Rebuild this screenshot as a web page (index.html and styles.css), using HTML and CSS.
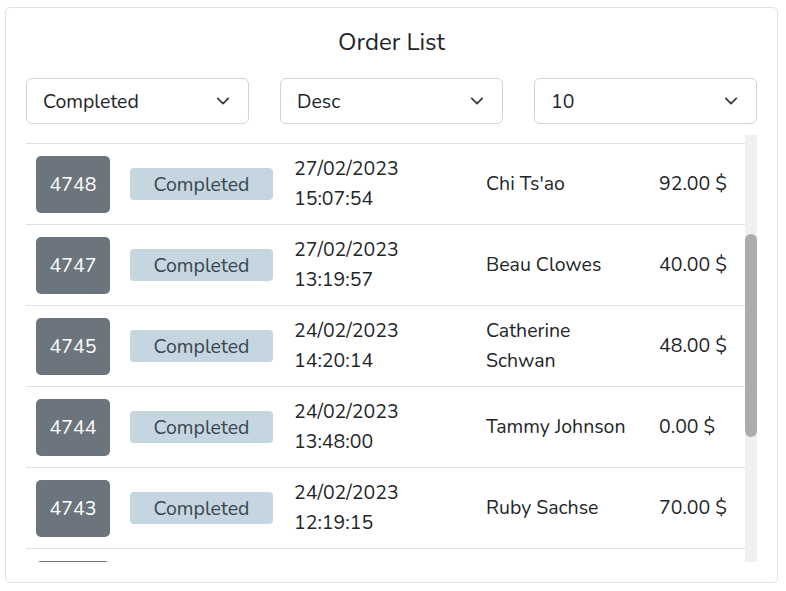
FILE: index.html
```html
<!DOCTYPE html>
<html lang="en">
<head>
<meta charset="utf-8">
<title>Order List</title>
<link rel="stylesheet" href="styles.css">
</head>
<body>
<div class="card">
  <h1 class="title">Order List</h1>
  <div class="filters">
    <div class="select"><span>Completed</span><svg class="chev" viewBox="0 0 16 16"><path d="M2 5l6 6 6-6"/></svg></div>
    <div class="select"><span>Desc</span><svg class="chev" viewBox="0 0 16 16"><path d="M2 5l6 6 6-6"/></svg></div>
    <div class="select"><span>10</span><svg class="chev" viewBox="0 0 16 16"><path d="M2 5l6 6 6-6"/></svg></div>
  </div>
  <div class="list-wrap">
    <div class="list" id="list">
      <div class="row"><div class="id">4752</div><div class="badge">Completed</div><div class="date">28/02/2023<br>10:12:31</div><div class="name">Lena Moritz</div><div class="amount">35.00 $</div></div>
      <div class="row"><div class="id">4750</div><div class="badge">Completed</div><div class="date">28/02/2023<br>09:41:08</div><div class="name">Omar Haddad</div><div class="amount">12.00 $</div></div>
      <div class="row"><div class="id">4749</div><div class="badge">Completed</div><div class="date">27/02/2023<br>18:03:22</div><div class="name">Ines Duarte</div><div class="amount">64.00 $</div></div>
      <div class="row"><div class="id">4748</div><div class="badge">Completed</div><div class="date">27/02/2023<br>15:07:54</div><div class="name">Chi Ts'ao</div><div class="amount">92.00 $</div></div>
      <div class="row"><div class="id">4747</div><div class="badge">Completed</div><div class="date">27/02/2023<br>13:19:57</div><div class="name">Beau Clowes</div><div class="amount">40.00 $</div></div>
      <div class="row"><div class="id">4745</div><div class="badge">Completed</div><div class="date">24/02/2023<br>14:20:14</div><div class="name">Catherine Schwan</div><div class="amount">48.00 $</div></div>
      <div class="row"><div class="id">4744</div><div class="badge">Completed</div><div class="date">24/02/2023<br>13:48:00</div><div class="name">Tammy Johnson</div><div class="amount">0.00 $</div></div>
      <div class="row"><div class="id">4743</div><div class="badge">Completed</div><div class="date">24/02/2023<br>12:19:15</div><div class="name">Ruby Sachse</div><div class="amount">70.00 $</div></div>
      <div class="row"><div class="id">4741</div><div class="badge">Completed</div><div class="date">23/02/2023<br>16:55:40</div><div class="name">Paul Berger</div><div class="amount">25.00 $</div></div>
      <div class="row"><div class="id">4740</div><div class="badge">Completed</div><div class="date">23/02/2023<br>11:02:17</div><div class="name">Mia Kovacs</div><div class="amount">58.00 $</div></div>
      <div class="row"><div class="id">4739</div><div class="badge">Completed</div><div class="date">22/02/2023<br>17:30:09</div><div class="name">Ravi Menon</div><div class="amount">81.00 $</div></div>
    </div>
    <div class="scrollbar"><div class="thumb" style="margin-top: 99px; height: 203px;"></div></div>
  </div>
</div>
<script src="script.js"></script>
</body>
</html>
```
FILE: styles.css
```css
* { box-sizing: border-box; }
html, body { margin: 0; padding: 0; background: #fff; }
body {
  padding: 7px 8px 0 5px;
  font-family: "Nunito", "Noto Sans", "Open Sans", sans-serif;
  color: #212529;
  font-size: 19.5px;
}
.card {
  border: 1px solid #dee2e6;
  border-radius: 5px;
  padding: 20px;
  height: 576px;
  display: flex;
  flex-direction: column;
}
.title {
  margin: 0 0 20px;
  font-size: 24px;
  font-weight: 400;
  line-height: 29px;
  text-align: center;
}
.filters {
  display: grid;
  grid-template-columns: repeat(3, 1fr);
  column-gap: 31px;
  margin-top: 1px;
  margin-bottom: 11px;
}
.select {
  height: 46px;
  border: 1px solid #ced4da;
  border-radius: 6px;
  display: flex;
  align-items: center;
  justify-content: space-between;
  padding: 0 18px 0 16px;
}
.chev {
  width: 14px;
  height: 14px;
  fill: none;
  stroke: #343a40;
  stroke-width: 2;
  stroke-linecap: round;
  stroke-linejoin: round;
}
.list-wrap {
  display: flex;
  height: 427px;
}
.list {
  flex: 1;
  overflow: hidden;
}
.scrollbar {
  width: 12px;
  flex: none;
  background: #f0f0f0;
}
.thumb {
  background: #acacac;
  border-radius: 6px;
}
.row {
  display: grid;
  grid-template-columns: 74px 143px 172px 154px auto;
  column-gap: 20px;
  align-items: center;
  border-top: 1px solid #dee2e6;
  padding: 10px 0 10px 10px;
}
.id {
  height: 57px;
  background: #6c757d;
  color: #fff;
  border-radius: 5px;
  display: flex;
  align-items: center;
  justify-content: center;
}
.badge {
  height: 32px;
  background: #c5d6e0;
  color: #3b4650;
  border-radius: 4px;
  display: flex;
  align-items: center;
  justify-content: center;
}
.date {
  line-height: 30px;
  padding-left: 1px;
}
.name {
  line-height: 30px;
  padding: 0 4px 0 1px;
}
.amount { line-height: 30px; }
```
FILE: script.js
```js
document.getElementById('list').scrollTop = 235;
```
